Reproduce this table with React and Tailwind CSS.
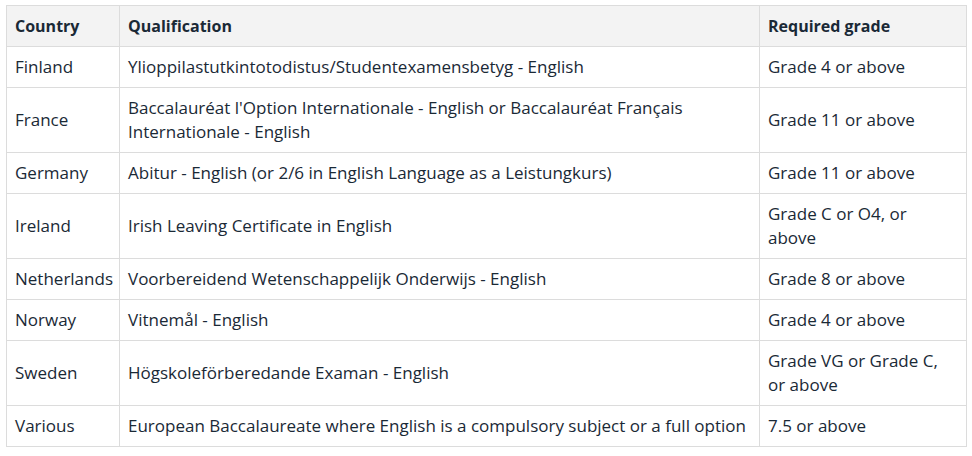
import React from "react";

const rows = [
  ["Finland", ["Ylioppilastutkintotodistus/Studentexamensbetyg - English"], ["Grade 4 or above"]],
  ["France", ["Baccalauréat l'Option Internationale - English or Baccalauréat Français", "Internationale - English"], ["Grade 11 or above"]],
  ["Germany", ["Abitur - English (or 2/6 in English Language as a Leistungkurs)"], ["Grade 11 or above"]],
  ["Ireland", ["Irish Leaving Certificate in English"], ["Grade C or O4, or", "above"]],
  ["Netherlands", ["Voorbereidend Wetenschappelijk Onderwijs - English"], ["Grade 8 or above"]],
  ["Norway", ["Vitnemål - English"], ["Grade 4 or above"]],
  ["Sweden", ["Högskoleförberedande Examan - English"], ["Grade VG or Grade C,", "or above"]],
  ["Various", ["European Baccalaureate where English is a compulsory subject or a full option"], ["7.5 or above"]],
];

function Lines({ lines }) {
  return lines.map((l, i) => (
    <React.Fragment key={i}>
      {i > 0 && <br />}
      {l}
    </React.Fragment>
  ));
}

export default function App() {
  return (
    <div className="w-[972px] h-[456px] bg-white pl-[6px] pt-[5px]" style={{ fontFamily: '"Open Sans", "Noto Sans", sans-serif' }}>
      <table className="border-collapse table-fixed w-[960px] text-[17px] leading-[24px] text-[#1a2936]">
        <colgroup>
          <col className="w-[113px]" />
          <col className="w-[640px]" />
          <col className="w-[207px]" />
        </colgroup>
        <thead>
          <tr className="bg-[#f3f3f3]">
            <th className="border border-[#dcdcdc] px-2 py-2 text-left text-[16px] font-bold whitespace-nowrap">Country</th>
            <th className="border border-[#dcdcdc] px-2 py-2 text-left text-[16px] font-bold whitespace-nowrap">Qualification</th>
            <th className="border border-[#dcdcdc] px-2 py-2 text-left text-[16px] font-bold whitespace-nowrap">Required grade</th>
          </tr>
        </thead>
        <tbody>
          {rows.map(([c, q, g]) => (
            <tr key={c}>
              <td className="border border-[#dcdcdc] px-2 py-2 whitespace-nowrap">{c}</td>
              <td className="border border-[#dcdcdc] px-2 py-2 whitespace-nowrap"><Lines lines={q} /></td>
              <td className="border border-[#dcdcdc] px-2 py-2 whitespace-nowrap"><Lines lines={g} /></td>
            </tr>
          ))}
        </tbody>
      </table>
    </div>
  );
}
